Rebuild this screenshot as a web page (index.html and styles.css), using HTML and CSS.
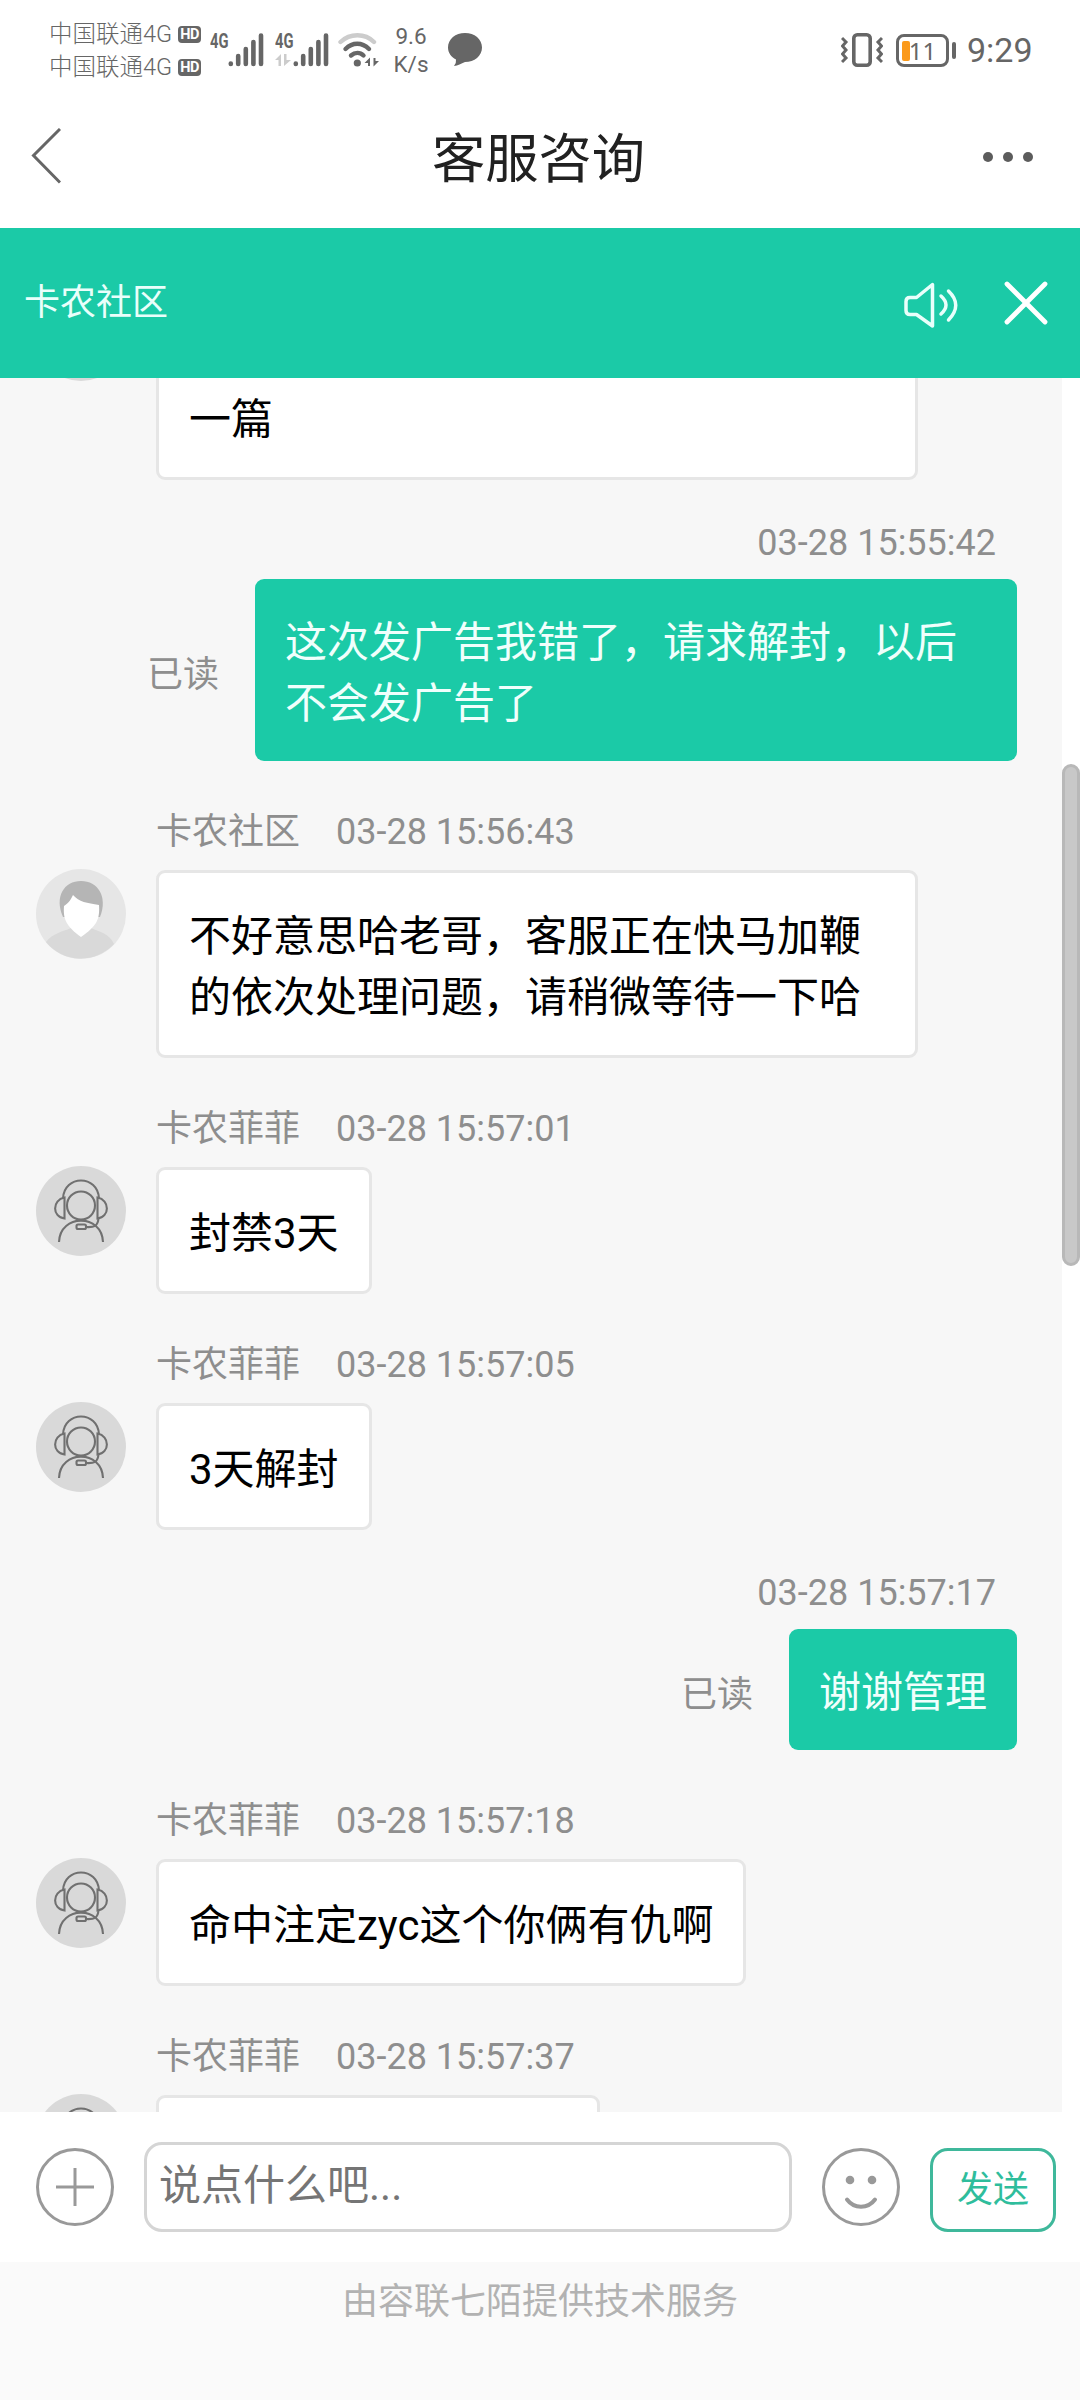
FILE: index.html
```html
<!DOCTYPE html>
<html lang="zh-CN">
<head>
<meta charset="utf-8">
<title>客服咨询</title>
<link rel="stylesheet" href="styles.css">
</head>
<body>
<svg class="defs" width="0" height="0">
  <symbol id="agent" viewBox="0 0 90 90">
    <circle cx="45" cy="45" r="45" fill="#d9d9d9"/>
    <g fill="none" stroke="#707070" stroke-width="2.1">
      <circle cx="45" cy="39.5" r="14"/>
      <path d="M27 32.5C28 8.500 62 8.500 63 32.500"/>
      <path d="M28.500 31.500C16 34 16 51 28.500 52.500ZM61.500 31.500C74 34 74 51 61.500 52.500Z"/>
      <path d="M23 76C24 47.500 66 47.500 67 76"/>
      <rect x="40.500" y="58.500" width="9.500" height="4.500" rx="1.500"/>
      <path d="M50 61C58 61.500 62 60.500 62.500 52"/>
    </g>
  </symbol>
  <symbol id="bars" viewBox="0 0 36 34">
    <g stroke="#666" stroke-width="4.600" stroke-linecap="round">
      <path d="M2.800 30.500V31M10.200 23V31M17.800 16V31M25.400 9V31M33 2.500V31"/>
    </g>
  </symbol>
</svg>
<div class="screen">
  <div class="status">
    <div class="carriers">
      <div class="carrier">中国联通4G<span class="hd">HD</span></div>
      <div class="carrier">中国联通4G<span class="hd">HD</span></div>
    </div>
    <div class="signal first"><span class="net"><b>4G</b></span><svg class="bars"><use href="#bars"/></svg></div>
    <div class="signal second"><span class="net"><b>4G</b><svg class="updown" viewBox="0 0 17 13"><path d="M0 6L6 0V12H3.500V6ZM16 6L9 12V0H11.500V6Z" fill="#ccc"/></svg></span><svg class="bars"><use href="#bars"/></svg></div>
    <svg class="wifi" viewBox="0 0 42 34">
      <g fill="none" stroke-linecap="round" stroke-width="4.400">
        <path d="M2.500 9C12 0 27 0 36 9" stroke="#ccc"/>
        <path d="M7.500 16C14.500 9 24 9 31 16M13 22.500C17 19 22 19 25.500 22.500" stroke="#666"/>
      </g>
      <circle cx="19.300" cy="30" r="3.600" fill="#666"/>
      <path d="M26.500 30L32 24.500V33H30V30ZM41 28L35.500 33.500V25H37.500V28Z" fill="#666"/>
    </svg>
    <div class="speed"><span>9.6</span><span>K/s</span></div>
    <svg class="talk" viewBox="0 0 36 36"><path d="M18 1C27.500 1 35 7 35 15.500S27.500 30 18 30C14 31.500 11 34 7 34Q9.500 31 9 27.500C4 25 1 20.500 1 15.500C1 7 8.500 1 18 1Z" fill="#666"/></svg>
    <svg class="vibrate" viewBox="0 0 42 34">
      <g fill="none" stroke="#666" stroke-width="3.600">
        <rect x="12.800" y="1.800" width="16.400" height="30.400" rx="3.500"/>
        <path d="M1 5L5 9L1.500 13L5 17L1.500 21L5 25L1 29M41 5L37 9L40.500 13L37 17L40.500 21L37 25L41 29" stroke-width="3"/>
      </g>
    </svg>
    <div class="battery"><span class="level"></span><span class="pct">11</span></div><i class="cap"></i>
    <span class="clock">9:29</span>
  </div>
  <div class="nav">
    <svg class="back" viewBox="0 0 30 56"><path d="M29 1L2.500 27.500L29 54.500" fill="none" stroke="#666" stroke-width="3"/></svg>
    <h1>客服咨询</h1>
    <div class="more"><i></i><i></i><i></i></div>
  </div>
  <div class="brand">
    <span class="brand-name">卡农社区</span>
    <svg class="speaker" viewBox="0 0 56 50"><g fill="none" stroke="#e9fffb" stroke-width="3.500" stroke-linecap="round" stroke-linejoin="round"><path d="M29.500 4.500V46L13.500 34.500H7Q3 34.500 3 30.500V21.500Q3 17.500 7 17.500H13.500ZM38 16Q48 25 38 34M45.500 11Q60 25 45.500 40"/></g></svg>
    <svg class="close" viewBox="0 0 44 44"><path d="M3 3L41 41M41 3L3 41" stroke="#fff" stroke-width="4.800" stroke-linecap="round"/></svg>
  </div>
  <div class="chat">
    <div class="messages">
      <div class="msg in cut">
        <div class="row"><svg class="avatar"><use href="#agent"/></svg><div class="bubble wide tall">一篇</div></div>
      </div>
      <div class="msg out">
        <div class="meta">03-28 15:55:42</div>
        <div class="row"><span class="read">已读</span><div class="bubble wide">这次发广告我错了，请求解封，以后不会发广告了</div></div>
      </div>
      <div class="msg in">
        <div class="meta"><span>卡农社区</span><span>03-28 15:56:43</span></div>
        <div class="row">
          <svg class="avatar" viewBox="0 0 90 90">
            <circle cx="45" cy="45" r="45" fill="#e6e6e6"/>
            <path d="M10 73C17 64 26 63 35 59H55C64 63 73 64 78 75A45 45 0 0 1 10 73Z" fill="#d9d9d9"/>
            <path d="M27 48C18 28 28 12 45 12S72 28 64 48Z" fill="#b5b5b5"/>
            <path d="M37 26C43 33 51 34 63 36C64 50 61 57 45 68C30 57 27 50 28 37C33 34 35 30 37 26Z" fill="#fff"/>
          </svg>
          <div class="bubble wide">不好意思哈老哥，客服正在快马加鞭的依次处理问题，请稍微等待一下哈</div>
        </div>
      </div>
      <div class="msg in">
        <div class="meta"><span>卡农菲菲</span><span>03-28 15:57:01</span></div>
        <div class="row"><svg class="avatar"><use href="#agent"/></svg><div class="bubble">封禁3天</div></div>
      </div>
      <div class="msg in">
        <div class="meta"><span>卡农菲菲</span><span>03-28 15:57:05</span></div>
        <div class="row"><svg class="avatar"><use href="#agent"/></svg><div class="bubble">3天解封</div></div>
      </div>
      <div class="msg out">
        <div class="meta">03-28 15:57:17</div>
        <div class="row"><span class="read">已读</span><div class="bubble">谢谢管理</div></div>
      </div>
      <div class="msg in">
        <div class="meta"><span>卡农菲菲</span><span>03-28 15:57:18</span></div>
        <div class="row"><svg class="avatar"><use href="#agent"/></svg><div class="bubble">命中注定zyc这个你俩有仇啊</div></div>
      </div>
      <div class="msg in">
        <div class="meta"><span>卡农菲菲</span><span>03-28 15:57:37</span></div>
        <div class="row"><svg class="avatar"><use href="#agent"/></svg><div class="bubble pending"></div></div>
      </div>
    </div>
    <div class="track"><div class="thumb"></div></div>
  </div>
  <div class="composer">
    <svg class="tool" viewBox="0 0 78 78"><g fill="none" stroke="#999" stroke-width="3"><circle cx="39" cy="39" r="37.500"/><path d="M20 39H58M39 20V58"/></g></svg>
    <div class="field">说点什么吧...</div>
    <svg class="tool" viewBox="0 0 78 78"><g fill="none" stroke="#999" stroke-width="3"><circle cx="39" cy="39" r="37.500"/><path d="M25 51.500C32 61 46 61 53 51.500" stroke-width="4" stroke-linecap="round"/></g><circle cx="28" cy="32" r="4.300" fill="#999"/><circle cx="50" cy="32" r="4.300" fill="#999"/></svg>
    <div class="send">发送</div>
  </div>
  <div class="footer">由容联七陌提供技术服务</div>
</div>
</body>
</html>
```
FILE: styles.css
```css
* { box-sizing: border-box; }
body { margin: 0; background: #fff; font-family: Roboto, "Noto Sans CJK SC", sans-serif; }
svg { display: block; flex: none; }
i { display: block; flex: none; }
.defs { position: absolute; }
.screen { width: 1080px; height: 2400px; display: flex; flex-direction: column; overflow: hidden; background: #fff; }

.status { height: 100px; display: flex; align-items: center; padding-left: 49px; color: #666; }
.carriers { width: 152px; height: 66px; }
.carrier { display: flex; align-items: center; justify-content: space-between; height: 33px; padding-top: 1px; font-size: 23.5px; font-weight: 300; line-height: 33px; white-space: nowrap; }
.hd { width: 23px; height: 17px; border-radius: 4px; background: #666; color: #fff; font-size: 14.5px; font-weight: 700; line-height: 17px; text-align: center; letter-spacing: -0.5px; }
.signal { display: flex; height: 34px; }
.first { margin-left: 9px; }
.second { margin-left: 11px; }
.net { width: 18px; }
.net b { display: block; width: 26px; font-size: 21px; line-height: 16px; transform: scaleX(0.7); transform-origin: 0 50%; }
.updown { width: 17px; height: 13px; margin-top: 5px; }
.bars { width: 36px; height: 34px; }
.wifi { width: 42px; height: 34px; margin-left: 9px; }
.speed { width: 36px; margin-left: 13px; display: flex; flex-direction: column; align-items: center; font-size: 22.5px; line-height: 28px; }
.talk { width: 36px; height: 36px; margin-left: 18px; }
.vibrate { width: 42px; height: 34px; margin-left: auto; }
.battery { position: relative; width: 53px; height: 33px; margin-left: 13px; border: 3px solid #666; border-radius: 8px; font: 24px/27px "Noto Sans", sans-serif; text-align: center; }
.level { position: absolute; left: 3px; top: 4px; width: 8px; height: 20px; border-radius: 2px; background: #fb9a1b; }
.pct { position: relative; }
.cap { width: 4px; height: 17px; margin-left: 3px; border-radius: 2px; background: #666; }
.clock { width: 68px; margin: 0 45px 0 11px; font-size: 34px; line-height: 40px; }

.nav { height: 128px; display: flex; align-items: center; justify-content: space-between; padding: 0 47px 14px 31px; }
.back { width: 30px; height: 56px; margin-top: -2px; }
h1 { margin: 5px 0 0 33px; font-size: 53.3px; font-weight: 400; line-height: 70px; color: #212121; }
.more { display: flex; gap: 10px; }
.more i { width: 10px; height: 10px; border-radius: 50%; background: #5c5c5c; }

.brand { height: 150px; flex: none; display: flex; align-items: center; padding: 0 32px 0 24px; background: #1bcaa7; color: #e9fffb; font-size: 36px; }
.brand-name { flex: 1; line-height: 50px; }
.speaker { width: 56px; height: 50px; margin: 4px 45px 0 0; }
.close { width: 44px; height: 44px; }

.chat { height: 1734px; flex: none; display: flex; overflow: hidden; background: #f7f7f7; }
.messages { width: 1062px; padding: 0 45px 0 36px; }
.msg { display: flex; flex-direction: column; }
.cut { margin-top: -86px; }
.meta { height: 109px; padding-top: 46px; font-size: 36px; line-height: 50px; color: #8e8e8e; display: flex; }
.in .meta { padding-left: 120px; gap: 36px; }
.out .meta { height: 99px; padding: 38px 21px 0 0; justify-content: flex-end; }
.row { display: flex; align-items: flex-start; gap: 30px; }
.out .row { justify-content: flex-end; align-items: center; gap: 36px; }
.avatar { width: 90px; height: 90px; margin-top: -1px; }
.bubble { padding: 33px 30px 27px; border: 3px solid #e6e6e6; border-radius: 9px; background: #fff; color: #000; font-size: 42px; line-height: 61px; }
.out .bubble { border: 0; background: #1bcaa7; color: #f0fffc; }
.wide { width: 762px; }
.tall { height: 188px; display: flex; align-items: flex-end; }
.pending { width: 444px; height: 127px; }
.read { padding-top: 10px; font-size: 36px; line-height: 50px; color: #8e8e8e; }
.track { width: 18px; padding-top: 386px; background: #fff; }
.thumb { height: 502px; border: 3px solid #b8b8b8; border-radius: 9px; background: #c8c8c8; }

.composer { height: 150px; flex: none; display: flex; align-items: center; padding: 0 24px 0 36px; background: #fff; }
.tool { width: 78px; height: 78px; }
.field { width: 648px; height: 90px; margin: 0 30px; padding: 0 12px; border: 3px solid #d5d5d5; border-radius: 18px; color: #757575; font-size: 42px; line-height: 82px; }
.send { width: 126px; height: 84px; margin: 6px 0 0 30px; border: 3px solid #3fb89b; border-radius: 18px; color: #2fbd9c; font-size: 36px; line-height: 78px; text-align: center; }
.footer { flex: 1; background: #fafafa; color: #b2b2b2; font-size: 36px; line-height: 50px; padding-top: 15px; text-align: center; }
```
